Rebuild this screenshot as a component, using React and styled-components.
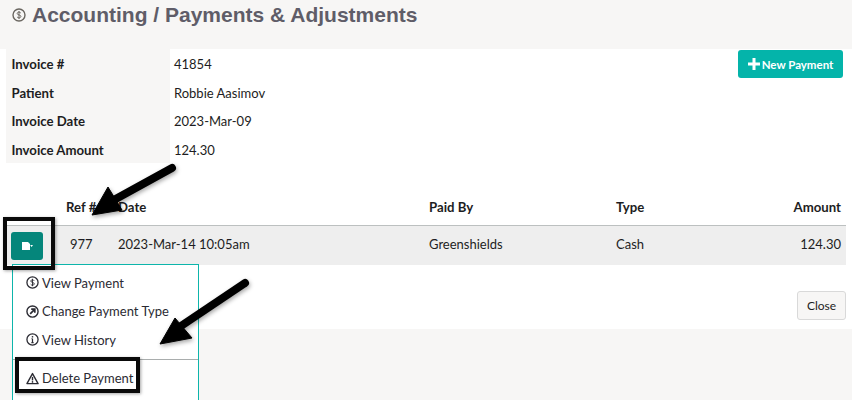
import { Fragment } from "react";
import styled, { createGlobalStyle } from "styled-components";

const GlobalStyle = createGlobalStyle`
    html, body {
        margin: 0;
        padding: 0;
        background: #f7f6f5;
    }
    body {
        font-family: "Lato", sans-serif;
        font-size: 13px;
        color: #1d1d22;
        height: 400px;
        overflow: hidden;
    }
`;

const Page = styled.div`
    position: relative;
    width: 852px;
    height: 400px;
    overflow: hidden;
`;

const Header = styled.div`
    height: 49px;
    box-sizing: border-box;
    padding: 3px 0 0 12px;
    display: flex;
    align-items: flex-start;
    gap: 6px;
`;

const Title = styled.h1`
    margin: 0;
    font-family: "Liberation Sans", Arial, sans-serif;
    font-size: 21px;
    line-height: 24px;
    font-weight: 700;
    color: #5f5d68;
`;

const TitleIcon = styled.span`
    display: flex;
    padding-top: 5px;
    color: #6a6660;
`;

const Panel = styled.div`
    background: #fff;
    height: 280px;
    box-sizing: border-box;
    padding: 0 6px;
`;

const TopRow = styled.div`
    display: flex;
    justify-content: space-between;
    align-items: flex-start;
    height: 150px;
`;

const InfoGrid = styled.div`
    display: grid;
    grid-template-columns: 164px 200px;
    grid-auto-rows: 28.5px;
`;

const InfoLabel = styled.div`
    background: #f7f6f5;
    font-size: 13.2px;
    font-weight: 700;
    padding-left: 5.5px;
    line-height: 30px;
`;

const InfoValue = styled.div`
    padding-left: 4px;
    line-height: 30px;
`;

const NewButton = styled.button`
    margin: 1px 3px 0 0;
    width: 105px;
    height: 28px;
    padding: 0;
    border: 0;
    border-radius: 3px;
    background: #04b4aa;
    color: #fff;
    font-family: "Lato", sans-serif;
    font-size: 11.5px;
    font-weight: 700;
    display: flex;
    align-items: center;
    justify-content: center;
    gap: 2px;
`;

const Table = styled.div`
    display: grid;
    grid-template-columns: 60px 52px 311px 187px 1fr 1fr;
`;

const HeadCell = styled.div`
    font-size: 13.2px;
    font-weight: 700;
    height: 26px;
    line-height: 17px;
    border-bottom: 1px solid #bcc0c0;
    padding-right: ${(p) => (p.$right ? "5px" : "0")};
    text-align: ${(p) => (p.$right ? "right" : "left")};
`;

const Cell = styled.div`
    background: #eeeeee;
    height: 39px;
    line-height: 37px;
    text-align: ${(p) => (p.$right ? "right" : "left")};
    padding-right: ${(p) => (p.$right ? "5px" : "0")};
    padding-left: ${(p) => (p.$ref ? "4px" : "0")};
`;

const ActionCell = styled.div`
    background: #eeeeee;
    height: 39px;
    display: flex;
    align-items: center;
`;

const RowButton = styled.button`
    margin-left: 5px;
    width: 32px;
    height: 28px;
    padding: 0;
    border: 0;
    border-radius: 3px;
    background: #05867b;
    display: flex;
    align-items: center;
    justify-content: center;
`;

const Footer = styled.div`
    display: flex;
    justify-content: flex-end;
    padding-top: 26px;
`;

const CloseButton = styled.button`
    width: 49px;
    height: 29px;
    padding: 0;
    border: 1px solid #d9d9d9;
    border-radius: 3px;
    background: #f7f6f5;
    color: #1d1d22;
    font-family: "Lato", sans-serif;
    font-size: 12px;
`;

const Menu = styled.div`
    position: absolute;
    left: 12px;
    top: 264px;
    width: 187px;
    height: 140px;
    box-sizing: border-box;
    border: 1px solid #0db5ab;
    background: #fff;
    padding-top: 3.5px;
`;

const MenuItem = styled.div`
    height: 28.5px;
    display: flex;
    align-items: center;
    gap: 3px;
    padding-left: 13px;
    color: #2b2b33;
`;

const MenuDivider = styled.div`
    height: 1px;
    margin: 5px 0 4px;
    background: #a9adad;
`;

const Highlight = styled.div`
    position: absolute;
    left: ${(p) => p.$x}px;
    top: ${(p) => p.$y}px;
    width: ${(p) => p.$w}px;
    height: ${(p) => p.$h}px;
    box-sizing: border-box;
    border: 4px solid #0a0a0a;
    box-shadow: 1px 1px 3px rgba(0, 0, 0, 0.35);
    pointer-events: none;
`;

const ArrowLayer = styled.svg`
    position: absolute;
    left: 0;
    top: 0;
    pointer-events: none;
`;

const DollarIcon = ({ size = 13 }) => (
    <svg width={size} height={size} viewBox="0 0 14 14" fill="none" stroke="currentColor">
        <circle cx="7" cy="7" r="6" strokeWidth="1.4" />
        <path d="M8.8 5.1C8.4 4.4 7.7 4.1 7 4.1c-1 0-1.8.5-1.8 1.4 0 1.9 3.7 1 3.7 2.9 0 .9-.9 1.5-1.9 1.5-.8 0-1.5-.3-1.9-1M7 3v8" strokeWidth="1" />
    </svg>
);

const ChangeIcon = () => (
    <svg width="13" height="13" viewBox="0 0 14 14" fill="none" stroke="currentColor">
        <circle cx="7" cy="7" r="6" strokeWidth="1.5" />
        <path d="M4.5 9.5L9.3 4.7M5.6 4.5h3.9v3.9" strokeWidth="1.8" />
    </svg>
);

const InfoIcon = () => (
    <svg width="13" height="13" viewBox="0 0 14 14" fill="none" stroke="currentColor">
        <circle cx="7" cy="7" r="6" strokeWidth="1.4" />
        <path d="M7 6.2v4M5.8 10.3h2.4M5.9 6.2H7" strokeWidth="1.3" />
        <circle cx="7" cy="4" r="0.9" fill="currentColor" stroke="none" />
    </svg>
);

const WarningIcon = () => (
    <svg width="13" height="13" viewBox="0 0 14 13" fill="none" stroke="currentColor">
        <path d="M7 1.2L13 12H1z" strokeWidth="1.5" strokeLinejoin="round" />
        <path d="M7 4.8v3.8" strokeWidth="1.5" />
        <circle cx="7" cy="10.2" r="0.9" fill="currentColor" stroke="none" />
    </svg>
);

const PlusIcon = () => (
    <svg width="12" height="12" viewBox="0 0 12 12" fill="#fff">
        <path d="M4.5 0h3v4.5H12v3H7.5V12h-3V7.5H0v-3h4.5z" />
    </svg>
);

const PaymentIcon = () => (
    <svg width="11" height="8" viewBox="0 0 11 8" fill="#fff">
        <path d="M0 0h6l2 2v6H0z" />
        <path d="M8.2 3H11L9.6 5z" />
    </svg>
);

const Arrows = () => (
    <ArrowLayer width="852" height="400" viewBox="0 0 852 400">
        <defs>
            <filter id="arrowShadow" x="-20%" y="-20%" width="140%" height="140%">
                <feDropShadow dx="1" dy="2" stdDeviation="2" floodColor="#000" floodOpacity="0.35" />
            </filter>
        </defs>
        <g filter="url(#arrowShadow)" fill="#050505" stroke="#050505">
            <path d="M172 168L112 201" strokeWidth="8" strokeLinecap="round" />
            <path d="M92 215L108 187L122 210z" strokeWidth="1" />
            <path d="M245 283L178 328" strokeWidth="8" strokeLinecap="round" />
            <path d="M160 344L175 318L192 338z" strokeWidth="1" />
        </g>
    </ArrowLayer>
);

const invoice = [
    ["Invoice #", "41854"],
    ["Patient", "Robbie Aasimov"],
    ["Invoice Date", "2023-Mar-09"],
    ["Invoice Amount", "124.30"],
];

const App = () => (
    <Page>
        <GlobalStyle />
        <Header>
            <TitleIcon>
                <DollarIcon size={14} />
            </TitleIcon>
            <Title>Accounting / Payments &amp; Adjustments</Title>
        </Header>
        <Panel>
            <TopRow>
                <InfoGrid>
                    {invoice.map(([label, value]) => (
                        <Fragment key={label}>
                            <InfoLabel>{label}</InfoLabel>
                            <InfoValue>{value}</InfoValue>
                        </Fragment>
                    ))}
                </InfoGrid>
                <NewButton>
                    <PlusIcon />
                    New Payment
                </NewButton>
            </TopRow>
            <Table>
                <HeadCell />
                <HeadCell>Ref #</HeadCell>
                <HeadCell>Date</HeadCell>
                <HeadCell>Paid By</HeadCell>
                <HeadCell>Type</HeadCell>
                <HeadCell $right>Amount</HeadCell>
            </Table>
            <Table>
                <ActionCell>
                    <RowButton>
                        <PaymentIcon />
                    </RowButton>
                </ActionCell>
                <Cell $ref>977</Cell>
                <Cell>2023-Mar-14 10:05am</Cell>
                <Cell>Greenshields</Cell>
                <Cell>Cash</Cell>
                <Cell $right>124.30</Cell>
            </Table>
            <Footer>
                <CloseButton>Close</CloseButton>
            </Footer>
        </Panel>
        <Menu>
            <MenuItem>
                <DollarIcon />
                View Payment
            </MenuItem>
            <MenuItem>
                <ChangeIcon />
                Change Payment Type
            </MenuItem>
            <MenuItem>
                <InfoIcon />
                View History
            </MenuItem>
            <MenuDivider />
            <MenuItem>
                <WarningIcon />
                Delete Payment
            </MenuItem>
        </Menu>
        <Highlight $x={3} $y={217} $w={52} $h={53} />
        <Highlight $x={15} $y={357} $w={125} $h={36} />
        <Arrows />
    </Page>
);

export default App;
